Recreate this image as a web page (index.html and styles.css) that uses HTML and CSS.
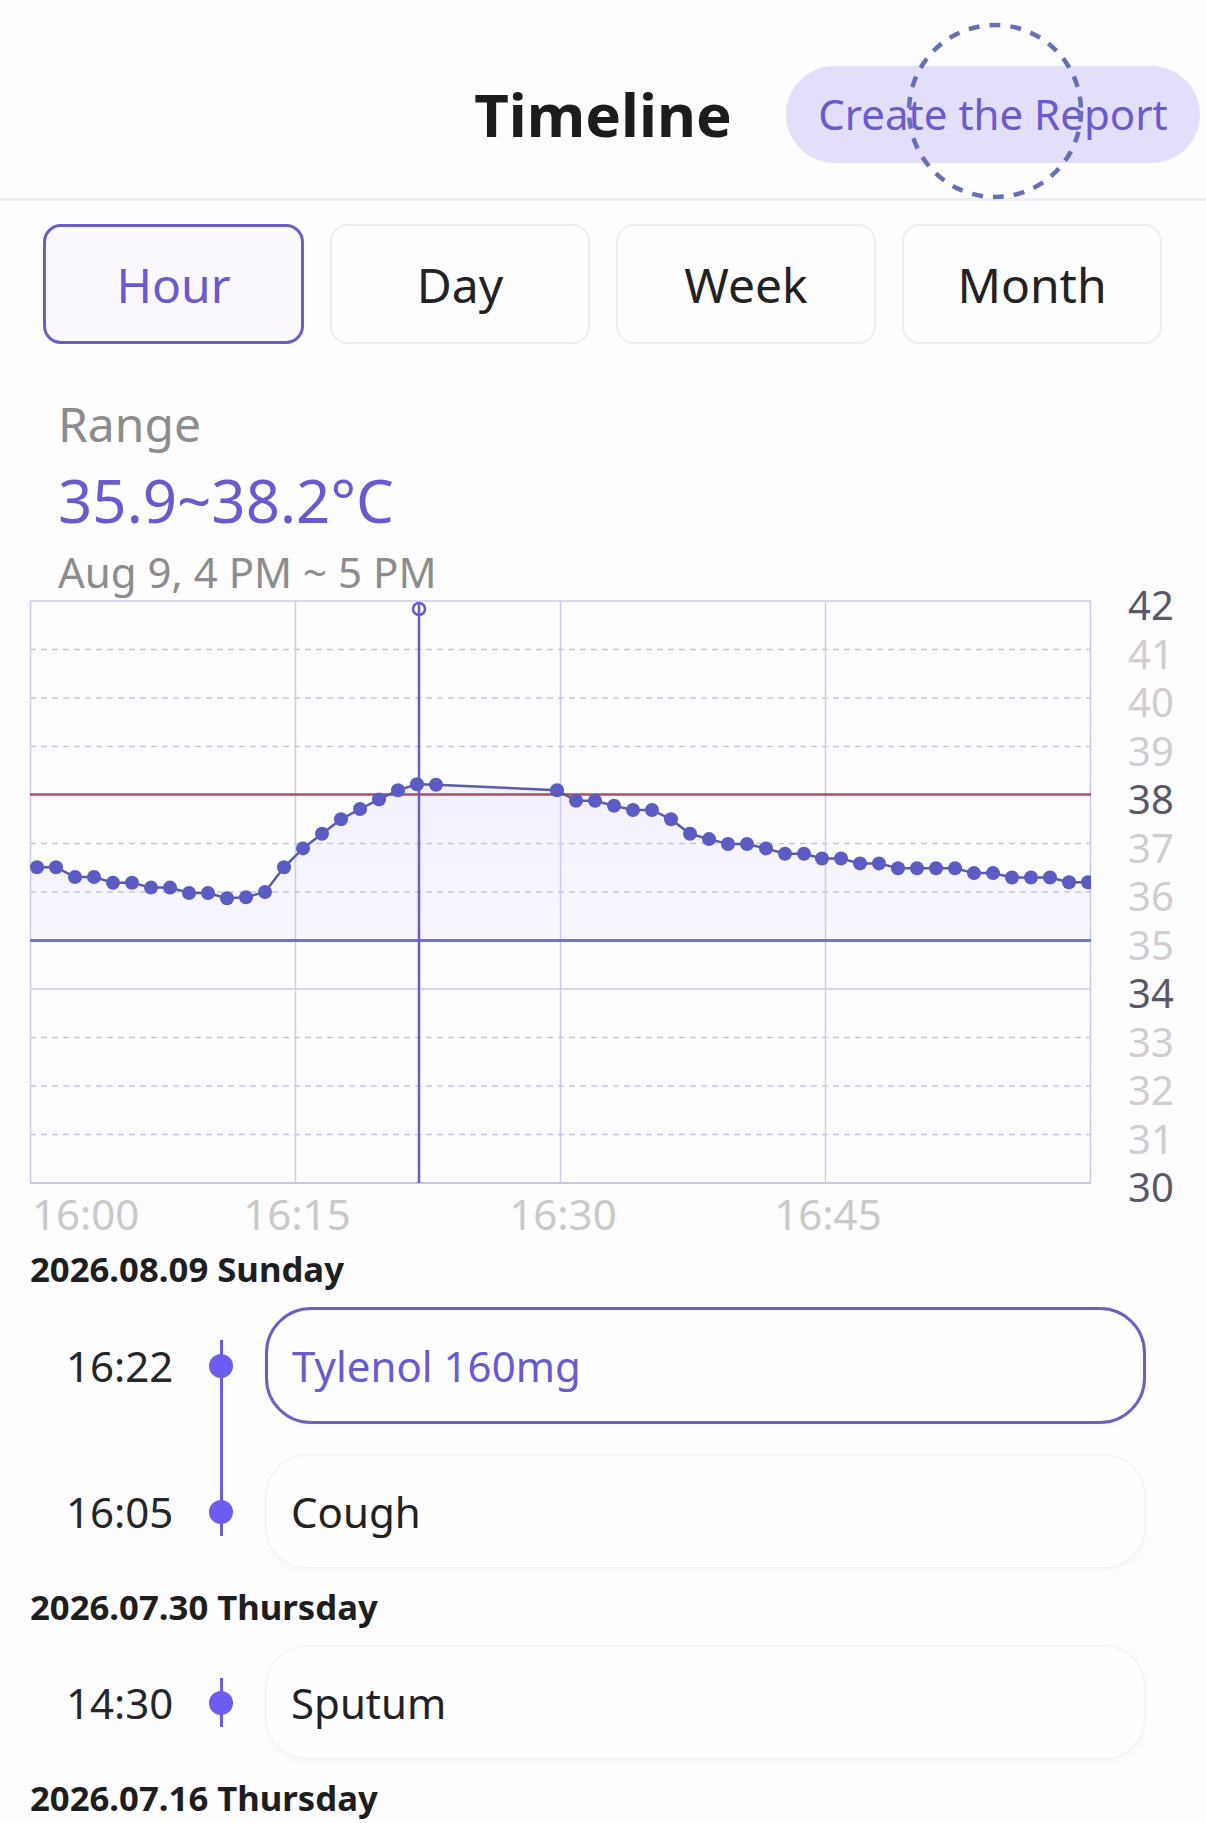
FILE: index.html
```html
<!DOCTYPE html>
<html lang="en">
<head>
<meta charset="utf-8">
<title>Timeline</title>
<link rel="stylesheet" href="styles.css">
</head>
<body>
<div class="page">
  <header class="topbar">
    <div class="topbar-side"></div>
    <h1 class="title">Timeline</h1>
    <div class="topbar-side topbar-right">
      <button class="report-btn">Create the Report</button>
    </div>
    <svg class="touch-ring" width="180" height="180" viewBox="0 0 180 180">
      <circle cx="90" cy="90" r="86" fill="none" stroke="#6670b8" stroke-width="4.5" stroke-dasharray="11 10"/>
    </svg>
  </header>

  <nav class="tabs">
    <div class="tab tab-active">Hour</div>
    <div class="tab">Day</div>
    <div class="tab">Week</div>
    <div class="tab">Month</div>
  </nav>

  <section class="summary">
    <div class="summary-label">Range</div>
    <div class="summary-value">35.9~38.2°C</div>
    <div class="summary-date">Aug 9, 4 PM ~ 5 PM</div>
  </section>

  <svg class="chart" width="1206" height="655" viewBox="0 590 1206 655">
    <defs>
      <clipPath id="plot">
        <rect x="30" y="601" width="1061" height="582"/>
      </clipPath>
      <linearGradient id="area" x1="0" y1="780" x2="0" y2="941" gradientUnits="userSpaceOnUse">
        <stop offset="0" stop-color="#f3f0fd"/>
        <stop offset="1" stop-color="#f8f7fe"/>
      </linearGradient>
    </defs>
    <g clip-path="url(#plot)">
      <polygon fill="url(#area)" points="30,867.3 37,867.3 56,867.3 75,877 94,877 113,882.8 132,882.8 151,887.6 170,887.6 189,893 208,893 227,898.3 246,897.3 265,892 284,867.3 303,848.4 322,833.8 341,819.3 360,809 379,799.4 398,790.2 417,784.3 436,784.8 557,790.2 576,800.8 595,800.8 614,805.7 633,810 652,810 671,819.3 690,833.8 709,839.1 728,844 747,844 766,848.4 785,853.7 804,853.7 822,858.5 841,858.5 860,863.4 879,863.4 898,868.2 917,868.2 936,868.2 955,868.2 974,873.1 993,873.1 1012,877.5 1031,877.5 1050,877.5 1069,882.3 1088,882.3 1091,882.3 1091,940.5 30,940.5"/>
    </g>
    <g class="grid-dash" stroke="#c8c5de" stroke-width="1.5" stroke-dasharray="6 5">
      <line x1="30" y1="649.5" x2="1091" y2="649.5"/>
      <line x1="30" y1="698" x2="1091" y2="698"/>
      <line x1="30" y1="746.5" x2="1091" y2="746.5"/>
      <line x1="30" y1="843.5" x2="1091" y2="843.5"/>
      <line x1="30" y1="892" x2="1091" y2="892"/>
      <line x1="30" y1="1037.5" x2="1091" y2="1037.5"/>
      <line x1="30" y1="1086" x2="1091" y2="1086"/>
      <line x1="30" y1="1134.5" x2="1091" y2="1134.5"/>
    </g>
    <g stroke="#cdc8f2" stroke-width="1.5">
      <line x1="30" y1="601" x2="1091" y2="601"/>
      <line x1="30" y1="989" x2="1091" y2="989"/>
      <line x1="30.5" y1="601" x2="30.5" y2="1183"/>
      <line x1="295.5" y1="601" x2="295.5" y2="1183"/>
      <line x1="560.5" y1="601" x2="560.5" y2="1183"/>
      <line x1="825.5" y1="601" x2="825.5" y2="1183"/>
      <line x1="1090.5" y1="601" x2="1090.5" y2="1183"/>
    </g>
    <line x1="30" y1="1183" x2="1091" y2="1183" stroke="#c9c7dd" stroke-width="2"/>
    <line x1="30" y1="794.5" x2="1091" y2="794.5" stroke="#b24a60" stroke-width="2.5"/>
    <line x1="30" y1="940.5" x2="1091" y2="940.5" stroke="#6479d9" stroke-width="3"/>

    <line x1="419" y1="603" x2="419" y2="1183" stroke="#6a5acd" stroke-width="2.5"/>
    <circle cx="419" cy="609" r="6" fill="none" stroke="#6a5acd" stroke-width="2.5"/>

    <g clip-path="url(#plot)">
      <polyline fill="none" stroke="#5b5ba8" stroke-width="2.5" points="37,867.3 56,867.3 75,877 94,877 113,882.8 132,882.8 151,887.6 170,887.6 189,893 208,893 227,898.3 246,897.3 265,892 284,867.3 303,848.4 322,833.8 341,819.3 360,809 379,799.4 398,790.2 417,784.3 436,784.8 557,790.2 576,800.8 595,800.8 614,805.7 633,810 652,810 671,819.3 690,833.8 709,839.1 728,844 747,844 766,848.4 785,853.7 804,853.7 822,858.5 841,858.5 860,863.4 879,863.4 898,868.2 917,868.2 936,868.2 955,868.2 974,873.1 993,873.1 1012,877.5 1031,877.5 1050,877.5 1069,882.3 1088,882.3"/>
      <g fill="#5a5cc4">
        <circle cx="37" cy="867.3" r="7"/><circle cx="56" cy="867.3" r="7"/><circle cx="75" cy="877" r="7"/><circle cx="94" cy="877" r="7"/>
        <circle cx="113" cy="882.8" r="7"/><circle cx="132" cy="882.8" r="7"/><circle cx="151" cy="887.6" r="7"/><circle cx="170" cy="887.6" r="7"/>
        <circle cx="189" cy="893" r="7"/><circle cx="208" cy="893" r="7"/><circle cx="227" cy="898.3" r="7"/><circle cx="246" cy="897.3" r="7"/>
        <circle cx="265" cy="892" r="7"/><circle cx="284" cy="867.3" r="7"/><circle cx="303" cy="848.4" r="7"/><circle cx="322" cy="833.8" r="7"/>
        <circle cx="341" cy="819.3" r="7"/><circle cx="360" cy="809" r="7"/><circle cx="379" cy="799.4" r="7"/><circle cx="398" cy="790.2" r="7"/>
        <circle cx="417" cy="784.3" r="7"/><circle cx="436" cy="784.8" r="7"/>
        <circle cx="557" cy="790.2" r="7"/><circle cx="576" cy="800.8" r="7"/><circle cx="595" cy="800.8" r="7"/><circle cx="614" cy="805.7" r="7"/>
        <circle cx="633" cy="810" r="7"/><circle cx="652" cy="810" r="7"/><circle cx="671" cy="819.3" r="7"/><circle cx="690" cy="833.8" r="7"/>
        <circle cx="709" cy="839.1" r="7"/><circle cx="728" cy="844" r="7"/><circle cx="747" cy="844" r="7"/><circle cx="766" cy="848.4" r="7"/>
        <circle cx="785" cy="853.7" r="7"/><circle cx="804" cy="853.7" r="7"/><circle cx="822" cy="858.5" r="7"/><circle cx="841" cy="858.5" r="7"/>
        <circle cx="860" cy="863.4" r="7"/><circle cx="879" cy="863.4" r="7"/><circle cx="898" cy="868.2" r="7"/><circle cx="917" cy="868.2" r="7"/>
        <circle cx="936" cy="868.2" r="7"/><circle cx="955" cy="868.2" r="7"/><circle cx="974" cy="873.1" r="7"/><circle cx="993" cy="873.1" r="7"/>
        <circle cx="1012" cy="877.5" r="7"/><circle cx="1031" cy="877.5" r="7"/><circle cx="1050" cy="877.5" r="7"/><circle cx="1069" cy="882.3" r="7"/>
        <circle cx="1088" cy="882.3" r="7"/>
      </g>
    </g>

    <g class="y-labels">
      <text x="1128" y="620" class="y-major">42</text>
      <text x="1128" y="668.5" class="y-minor">41</text>
      <text x="1128" y="717" class="y-minor">40</text>
      <text x="1128" y="765.5" class="y-minor">39</text>
      <text x="1128" y="814" class="y-major">38</text>
      <text x="1128" y="862.5" class="y-minor">37</text>
      <text x="1128" y="911" class="y-minor">36</text>
      <text x="1128" y="959.5" class="y-minor">35</text>
      <text x="1128" y="1008" class="y-major">34</text>
      <text x="1128" y="1056.5" class="y-minor">33</text>
      <text x="1128" y="1105" class="y-minor">32</text>
      <text x="1128" y="1153.5" class="y-minor">31</text>
      <text x="1128" y="1202" class="y-major">30</text>
    </g>
    <g class="x-labels">
      <text x="32" y="1230">16:00</text>
      <text x="297" y="1230" text-anchor="middle">16:15</text>
      <text x="563" y="1230" text-anchor="middle">16:30</text>
      <text x="828" y="1230" text-anchor="middle">16:45</text>
    </g>
  </svg>

  <section class="timeline">
    <div class="day">
      <h2 class="day-title">2026.08.09 Sunday</h2>
      <div class="entries">
        <div class="entry">
          <div class="entry-time">16:22</div>
          <div class="entry-rail"><span class="entry-dot"></span></div>
          <div class="entry-card entry-card-active">Tylenol 160mg</div>
        </div>
        <div class="entry">
          <div class="entry-time">16:05</div>
          <div class="entry-rail"><span class="entry-dot"></span></div>
          <div class="entry-card">Cough</div>
        </div>
      </div>
    </div>
    <div class="day">
      <h2 class="day-title">2026.07.30 Thursday</h2>
      <div class="entries">
        <div class="entry">
          <div class="entry-time">14:30</div>
          <div class="entry-rail"><span class="entry-dot"></span></div>
          <div class="entry-card">Sputum</div>
        </div>
      </div>
    </div>
    <div class="day">
      <h2 class="day-title">2026.07.16 Thursday</h2>
    </div>
  </section>
</div>
</body>
</html>
```

FILE: styles.css
```css
* {
  box-sizing: border-box;
}

html, body {
  margin: 0;
  padding: 0;
}

body {
  background: #fdfcfe;
  font-family: "Noto Sans", "Open Sans", "DejaVu Sans", sans-serif;
  color: #222222;
  overflow: hidden;
}

.page {
  width: 1206px;
  height: 1823px;
  overflow: hidden;
  position: relative;
}

/* Header */
.topbar {
  position: relative;
  height: 201px;
  padding-top: 30px;
  border-bottom: 3px solid #efeef3;
  display: grid;
  grid-template-columns: 1fr auto 1fr;
  align-items: center;
}

.title {
  margin: 0;
  font-size: 60px;
  font-weight: 700;
  line-height: 1;
  color: #1c1c1c;
}

.topbar-right {
  display: flex;
  justify-content: flex-end;
  padding-right: 6px;
}

.report-btn {
  width: 414px;
  height: 97px;
  border: none;
  border-radius: 49px;
  background: #e3defa;
  color: #6a5acd;
  font-family: "Noto Sans", "Open Sans", sans-serif;
  font-size: 42px;
  padding: 0;
  line-height: 1;
}

.touch-ring {
  position: absolute;
  left: 905px;
  top: 21px;
}

/* Tabs */
.tabs {
  display: flex;
  gap: 26px;
  padding: 23px 0 0 43px;
}

.tab {
  width: 260px;
  height: 120px;
  border: 2px solid #efedf2;
  border-radius: 18px;
  background: #fefdff;
  display: flex;
  align-items: center;
  justify-content: center;
  font-size: 48px;
  color: #222222;
}

.tab-active {
  width: 261px;
  border: 3px solid #6c5fc2;
  background: #fcf8ff;
  color: #6a5acd;
}

/* Summary */
.summary {
  padding: 48px 0 0 58px;
}

.summary-label {
  font-size: 48px;
  line-height: 64px;
  color: #8c8c8c;
}

.summary-value {
  font-size: 60px;
  line-height: 88px;
  color: #6a5acd;
}

.summary-date {
  font-size: 42px;
  line-height: 36px;
  height: 46px;
  padding-top: 10px;
  color: #8c8c8c;
}

/* Chart */
.chart {
  display: block;
  overflow: visible;
  font-family: "Noto Sans", "Open Sans", sans-serif;
}

.y-labels text {
  font-size: 40px;
}

.y-major {
  fill: #5a5866;
}

.y-minor {
  fill: #d0ccd2;
}

.x-labels text {
  font-size: 42px;
  fill: #c9c9c9;
}

/* Timeline */
.day-title {
  margin: 0;
  padding-left: 30px;
  font-size: 34.7px;
  line-height: 48px;
  font-weight: 700;
  color: #1e1e1e;
}

.day + .day .day-title {
  margin-top: 14px;
}

.entries {
  position: relative;
  display: flex;
  flex-direction: column;
  gap: 30px;
  margin-top: 14px;
}

.entries::before {
  content: "";
  position: absolute;
  left: 219.5px;
  top: 33px;
  bottom: 33px;
  width: 3px;
  background: #6c5ce7;
}

.entry {
  display: grid;
  grid-template-columns: 111px 50px 881px;
  column-gap: 19px;
  padding-left: 66px;
  align-items: center;
}

.entry-time {
  font-size: 42px;
  color: #262626;
}

.entry-rail {
  display: flex;
  justify-content: center;
  align-items: center;
}

.entry-dot {
  display: block;
  width: 24px;
  height: 24px;
  border-radius: 50%;
  background: #6c5cf0;
  position: relative;
  z-index: 1;
}

.entry-card {
  height: 115px;
  border: 2px solid #f6f4f8;
  border-radius: 42px;
  background: #fefdff;
  box-shadow: 0 3px 5px rgba(60, 40, 120, 0.02);
  display: flex;
  align-items: center;
  padding-left: 24px;
  font-size: 42px;
  color: #222222;
}

.entry-card-active {
  height: 117px;
  border: 3px solid #6e5fc0;
  border-radius: 46px;
  color: #6a5acd;
}
```
